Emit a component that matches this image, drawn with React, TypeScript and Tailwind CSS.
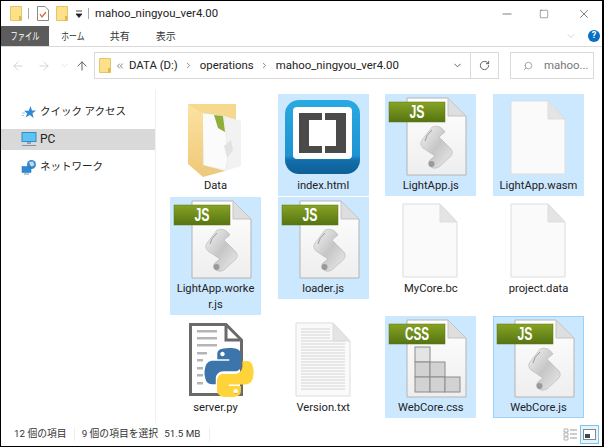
import { useId } from "react";
import { ArrowLeft, ArrowRight, ArrowUp, ChevronDown, ChevronRight, ChevronsLeft, Minus, RotateCw, Search, Square, X } from "lucide-react";

const font = "font-['Roboto','Noto_Sans_CJK_JP',sans-serif]";

function SmallFolder() {
  return (
    <svg width="12" height="15" viewBox="0 0 12 15">
      <path d="M0.5 0.5H11.5V14.5H0.5Z" fill="#fce08a" stroke="#e8c468" />
      <path d="M9 10H11.5V14.5H9Z" fill="#e3b64e" />
    </svg>
  );
}

function Page({ fold = 18 }: { fold?: number }) {
  const id = useId();
  return (
    <>
      <defs>
        <linearGradient id={id} x1="0" y1="0" x2="0" y2="1">
          <stop offset="0" stopColor="#ffffff" />
          <stop offset="1" stopColor="#eeeeee" />
        </linearGradient>
      </defs>
      <path d={`M22 4H${81 - fold}L81 ${4 + fold}V81H22Z`} fill={`url(#${id})`} stroke="#b4b4b4" />
      <path d={`M${81 - fold} 4V${4 + fold}H81Z`} fill="#dedede" stroke="#c4c4c4" />
    </>
  );
}

function Badge({ label, width }: { label: string; width: number }) {
  const id = useId();
  return (
    <>
      <defs>
        <linearGradient id={id} x1="0" y1="0" x2="0" y2="1">
          <stop offset="0" stopColor="#87a324" />
          <stop offset="1" stopColor="#557412" />
        </linearGradient>
      </defs>
      <rect x="4" y="8" width="56" height="20" fill={`url(#${id})`} stroke="#5e7412" strokeWidth="0.5" />
      <text
        x="32"
        y="24"
        textAnchor="middle"
        fill="#ffffff"
        fontFamily="Liberation Sans, sans-serif"
        fontWeight="700"
        fontSize="19"
        textLength={width}
        lengthAdjust="spacingAndGlyphs"
      >
        {label}
      </text>
    </>
  );
}

function JsIcon() {
  const id = useId();
  return (
    <svg width="91" height="84" viewBox="0 0 91 84">
      <defs>
        <linearGradient id={id} x1="0" y1="0" x2="1" y2="1">
          <stop offset="0" stopColor="#f4f4f4" />
          <stop offset="0.5" stopColor="#c6c6c6" />
          <stop offset="1" stopColor="#ececec" />
        </linearGradient>
      </defs>
      <Page />
      <Badge label="JS" width={15} />
      <path
        d="M47 33Q55 30 60 38L54 43L66 55Q69 59 65 63L54 73Q48 76 45 72Q42 68 46 65L50 62L38 54Q34 50 37 46Z"
        fill={`url(#${id})`}
        stroke="#aaaaaa"
        strokeWidth="0.5"
      />
      <path d="M47 36Q41 41 40 47" fill="none" stroke="#9a9a9a" />
      <circle cx="46.5" cy="70" r="3" fill="#9a9a9a" />
    </svg>
  );
}

function CssIcon() {
  const cells = [
    [30, 31],
    [30, 46],
    [45, 46],
    [30, 61],
    [45, 61],
    [60, 61],
  ];
  return (
    <svg width="91" height="84" viewBox="0 0 91 84">
      <Page />
      <Badge label="CSS" width={24} />
      {cells.map(([x, y]) => (
        <rect key={`${x}-${y}`} x={x} y={y} width="15" height="15" fill={y === 31 ? "#e4e4e4" : "#d2d2d2"} stroke="#8c8c8c" />
      ))}
    </svg>
  );
}

function BlankIcon({ lines = false }: { lines?: boolean }) {
  const rows = [];
  for (let y = 13; y < 74; y += 3) rows.push(y);
  return (
    <svg width="91" height="84" viewBox="0 0 91 84">
      <path d="M18 7H55L72 25V80H18Z" fill="#fafafa" stroke="#dddddd" />
      {lines &&
        rows.map((y) => <path key={y} d={`M23 ${y}H${y < 25 ? 52 : 67}`} stroke="#d4d4d4" />)}
      <path d="M55 7V25H72Z" fill="#e4e4e4" stroke="#dddddd" />
    </svg>
  );
}

function BracketsIcon() {
  const id = useId();
  return (
    <svg width="91" height="84" viewBox="0 0 91 84">
      <defs>
        <linearGradient id={id} x1="0" y1="0" x2="0" y2="1">
          <stop offset="0" stopColor="#29a9e1" />
          <stop offset="0.75" stopColor="#1f93d2" />
          <stop offset="0.82" stopColor="#126eaa" />
          <stop offset="1" stopColor="#0f5f95" />
        </linearGradient>
      </defs>
      <rect x="7" y="6" width="75" height="74" rx="14" fill={`url(#${id})`} />
      <rect x="15" y="13" width="59" height="52" rx="4" fill="#ffffff" />
      <path d="M21 19H44V26H31V52H44V59H21Z" fill="#4a4a4a" />
      <path d="M47 19H68V59H47V52H58V26H47Z" fill="#4a4a4a" />
    </svg>
  );
}

function FolderIcon() {
  const id = useId();
  return (
    <svg width="91" height="84" viewBox="0 0 91 84">
      <defs>
        <linearGradient id={id} x1="0" y1="0" x2="0" y2="1">
          <stop offset="0" stopColor="#fbe3a2" />
          <stop offset="1" stopColor="#efc877" />
        </linearGradient>
      </defs>
      <path d="M18 10H66V70H18Z" fill="#f6d88e" />
      <path d="M30 21L54 22L71 27V72L52 78L33 72Z" fill="#f2f2f2" />
      <path d="M32 19L54 22L58 60L56 76L34 72Z" fill="#fbfbfb" stroke="#e2e2e2" strokeWidth="0.5" />
      <path d="M44 21L53 22L55 38L48 34Z" fill="#8fae3a" />
      <path d="M54 52L61 46L63 56L57 64Z" fill="#e2e2e2" />
      <path d="M18 10L33 20V83L18 70Z" fill={`url(#${id})`} />
      <path d="M33 71L55 77L33 83Z" fill="#eccb7e" />
    </svg>
  );
}

const pyPath =
  "M54.9 0C50.3 0 46 .4 42.1 1.1 30.8 3.1 28.7 7.3 28.7 15V25.3H55.5V28.7H18.6C10.8 28.7 4 33.3 1.9 42.3-.6 52.5-.7 58.8 1.9 69.1 3.8 76.7 8.3 81.1 16.1 81.1H25.3V68.8C25.3 60 33 52.1 42.1 52.1H68.9C76.4 52.1 82.3 46 82.3 38.5V15C82.3 7.8 76.2 2.3 68.9 1.1 64.2.3 59.5 0 54.9 0ZM40.4 8.2C43.2 8.2 45.4 10.5 45.4 13.3S43.2 18.4 40.4 18.4 35.4 16.1 35.4 13.3 37.6 8.2 40.4 8.2Z";

function PythonIcon() {
  return (
    <svg width="91" height="84" viewBox="0 0 91 84">
      <path d="M20.5 8.5H56L71.5 24V78.5H20.5Z" fill="#ffffff" stroke="#6a6a6a" strokeWidth="3" />
      <path d="M56 8.5V24H71.5" fill="none" stroke="#6a6a6a" strokeWidth="3" />
      {[14, 21, 28, 36, 43, 51, 58, 66].map((y, i) => (
        <rect key={y} x="27" y={y} width={i < 3 ? 20 : i === 3 ? 10 : 6} height="2.5" fill="#b5b5b5" />
      ))}
      <svg x="34" y="32" width="50" height="49" viewBox="0 0 110 110">
        <path d={pyPath} fill="#3b75a9" />
        <path d={pyPath} fill="#ffd43b" transform="rotate(180 55.2 55.2)" />
      </svg>
    </svg>
  );
}

function QuickStar() {
  return (
    <svg width="16" height="16" viewBox="0 0 16 16">
      <path d="M9.5 2L11 6.5H15L11.5 9.2L12.5 14L8.8 11L4.5 13.5L6.2 9.5L3 6.8H7.8Z" fill="#2f8ad6" />
      <path d="M1 9H4M0.5 11.5H3" stroke="#9cc8ec" />
    </svg>
  );
}

function PcIcon() {
  return (
    <svg width="16" height="16" viewBox="0 0 16 16">
      <rect x="1" y="1.5" width="14" height="9" fill="#5ec3f2" stroke="#2f8ec7" />
      <path d="M6 11H10V13H6Z" fill="#90a4b4" />
      <path d="M1 14.5H15" stroke="#7e94a8" />
    </svg>
  );
}

function NetworkIcon() {
  return (
    <svg width="16" height="16" viewBox="0 0 16 16">
      <circle cx="10.5" cy="5.5" r="4.5" fill="#3f88c9" />
      <path d="M8 3L12 2.5L13.5 6L10 8Z" fill="#b9dcf5" />
      <rect x="1" y="7.5" width="9" height="6" fill="#2f8ad6" stroke="#1f6bab" strokeWidth="0.5" />
      <path d="M3 15H8" stroke="#7e94a8" />
    </svg>
  );
}

type FileItem = { name: string; icon: React.ReactNode; selected?: boolean; focused?: boolean };

const files: FileItem[] = [
  { name: "Data", icon: <FolderIcon /> },
  { name: "index.html", icon: <BracketsIcon />, selected: true },
  { name: "LightApp.js", icon: <JsIcon />, selected: true },
  { name: "LightApp.wasm", icon: <BlankIcon />, selected: true },
  { name: "LightApp.worker.js", icon: <JsIcon />, selected: true },
  { name: "loader.js", icon: <JsIcon />, selected: true },
  { name: "MyCore.bc", icon: <BlankIcon /> },
  { name: "project.data", icon: <BlankIcon /> },
  { name: "server.py", icon: <PythonIcon /> },
  { name: "Version.txt", icon: <BlankIcon lines /> },
  { name: "WebCore.css", icon: <CssIcon />, selected: true },
  { name: "WebCore.js", icon: <JsIcon />, selected: true, focused: true },
];

function Tile({ item }: { item: FileItem }) {
  const bg = item.focused
    ? "bg-[#cce8ff] outline outline-1 -outline-offset-1 outline-[#99d1ff]"
    : item.selected
      ? "bg-[#cce8ff]"
      : "";
  return (
    <div className={`flex w-[91px] flex-col items-center pb-[2px] ${bg}`}>
      {item.icon}
      <div className="w-[88px] text-center text-[11.2px] leading-[16px] break-all text-[#222]">
        {item.name === "LightApp.worker.js" ? (
          <>
            LightApp.worke
            <br />
            r.js
          </>
        ) : (
          item.name
        )}
      </div>
    </div>
  );
}

export default function App() {
  return (
    <div className={`flex h-[447px] w-[604px] flex-col bg-black pr-px pb-px ${font}`}>
      <div className="flex h-[446px] w-[603px] flex-col overflow-hidden border-t border-r border-l border-black bg-white">
        <div className="flex h-[25px] shrink-0 items-center pl-[9px]">
          <SmallFolder />
          <div className="mx-[6px] h-[11px] w-px bg-[#aaa]" />
          <svg className="ml-[2px]" width="12" height="15" viewBox="0 0 12 15">
            <path d="M.5.5H8L11.5 4V14.5H.5Z" fill="#fff" stroke="#8a8a8a" />
            <path d="M3 8L5 11L9 6" fill="none" stroke="#d9682c" strokeWidth="1.3" />
          </svg>
          <div className="ml-[7px]">
            <SmallFolder />
          </div>
          <svg className="ml-[7px]" width="8" height="8" viewBox="0 0 8 8">
            <path d="M1 1H7M1 4H7L4 7.5Z" fill="#222" stroke="#222" strokeWidth="0.8" />
          </svg>
          <div className="ml-[5px] h-[11px] w-px bg-[#aaa]" />
          <span className="ml-[6px] text-[11.4px] text-[#222]">mahoo_ningyou_ver4.00</span>
          <div className="ml-auto flex items-center text-[#222]">
            <Minus size={14} strokeWidth={1} className="mr-[25px]" />
            <Square size={10} strokeWidth={1} className="mr-[28px]" />
            <X size={14} strokeWidth={1} className="mr-[11px]" />
          </div>
        </div>

        <div className="flex h-[21px] shrink-0 items-center border-b border-[#dadada] text-[10px] text-[#333]">
          <div className="flex h-full w-[48px] items-center justify-center bg-[#5c5c5c] text-white">
            <span className="inline-block scale-x-[0.72]">ファイル</span>
          </div>
          <span className="ml-[9px] inline-block scale-x-[0.78]">ホーム</span>
          <span className="ml-[22px]">共有</span>
          <span className="ml-[26px]">表示</span>
          <div className="ml-auto flex items-center">
            <ChevronDown size={12} className="mr-[11px] text-[#aaa]" strokeWidth={1} />
            <div className="mr-[2px] flex size-[12px] items-center justify-center rounded-full bg-[#0a6fc2] text-[9px] font-bold text-white">?</div>
          </div>
        </div>

        <div className="flex h-[43px] shrink-0 items-start pt-[5px] pl-[10px] text-[#c8c8c8]">
          <div className="flex h-[27px] items-center">
            <ArrowLeft size={14} strokeWidth={1.3} />
            <ArrowRight size={14} strokeWidth={1.3} className="ml-[12px]" />
            <ChevronDown size={9} strokeWidth={1.3} className="ml-[9px]" />
            <ArrowUp size={14} strokeWidth={1.6} className="ml-[6px] text-[#555]" />
          </div>
          <div className="ml-[5px] flex h-[27px] w-[405px] items-center border border-[#d9d9d9] pl-[4px] text-[11.4px] text-[#222]">
            <SmallFolder />
            <ChevronsLeft size={10} className="ml-[4px] text-[#666]" />
            <span className="ml-[4px]">DATA (D:)</span>
            <ChevronRight size={9} className="mx-[6.5px] text-[#666]" />
            <span>operations</span>
            <ChevronRight size={9} className="mx-[6.5px] text-[#666]" />
            <span>mahoo_ningyou_ver4.00</span>
            <ChevronDown size={11} className="ml-auto text-[#555]" />
            <div className="ml-[7px] flex h-full w-[28px] items-center justify-center border-l border-[#d9d9d9]">
              <RotateCw size={11} className="text-[#555]" />
            </div>
          </div>
          <div className="ml-[11px] flex h-[27px] w-[84px] items-center border border-[#d9d9d9] pl-[12px] text-[11.4px] text-[#777]">
            <Search size={10} className="-scale-x-100 text-[#999]" />
            <span className="ml-[11px]">mahoo...</span>
          </div>
        </div>

        <div className="flex min-h-0 flex-1">
          <div className="flex w-[155px] shrink-0 flex-col gap-[6.5px] border-r border-[#f0f0f0] pt-[11px] text-[10.5px] text-[#222]">
            <div className="flex h-[21px] items-center gap-[3px] pl-[20px]">
              <QuickStar />
              クイック アクセス
            </div>
            <div className="flex h-[21px] items-center gap-[3px] bg-[#d9d9d9] pl-[20px] text-[12px]">
              <PcIcon />
              PC
            </div>
            <div className="flex h-[21px] items-center gap-[3px] pl-[20px]">
              <NetworkIcon />
              ネットワーク
            </div>
          </div>
          <div className="grid grid-cols-[repeat(4,91px)] content-start items-start gap-x-[16.67px] gap-y-px pt-[4px] pl-[14px]">
            {files.map((f) => (
              <Tile key={f.name} item={f} />
            ))}
          </div>
        </div>

        <div className="flex h-[23px] shrink-0 items-center pl-[13px] text-[9.8px] text-[#333]">
          <span>12 個の項目</span>
          <div className="mx-[7px] h-[13px] w-px bg-[#eee]" />
          <span>9 個の項目を選択</span>
          <span className="ml-[6px]">51.5 MB</span>
          <div className="ml-[9px] h-[13px] w-px bg-[#eee]" />
          <div className="ml-auto mr-[3px] flex items-center gap-[2px]">
            <svg width="15" height="15" viewBox="0 0 15 15">
              <path d="M1 2H5V5H1ZM1 6H5V9H1ZM1 10H5V13H1Z" fill="#fff" stroke="#999" strokeWidth="0.7" />
              <path d="M7 3H14M7 7H14M7 11H14" stroke="#999" />
            </svg>
            <div className="flex size-[19px] items-center justify-center border border-[#7ac4ee] bg-[#e5f3fb]">
              <svg width="13" height="11" viewBox="0 0 13 11">
                <rect x=".5" y=".5" width="12" height="10" fill="#fff" stroke="#888" />
                <path d="M2 5H7V9H2Z" fill="#3a4a5a" />
              </svg>
            </div>
          </div>
        </div>
      </div>
    </div>
  );
}
